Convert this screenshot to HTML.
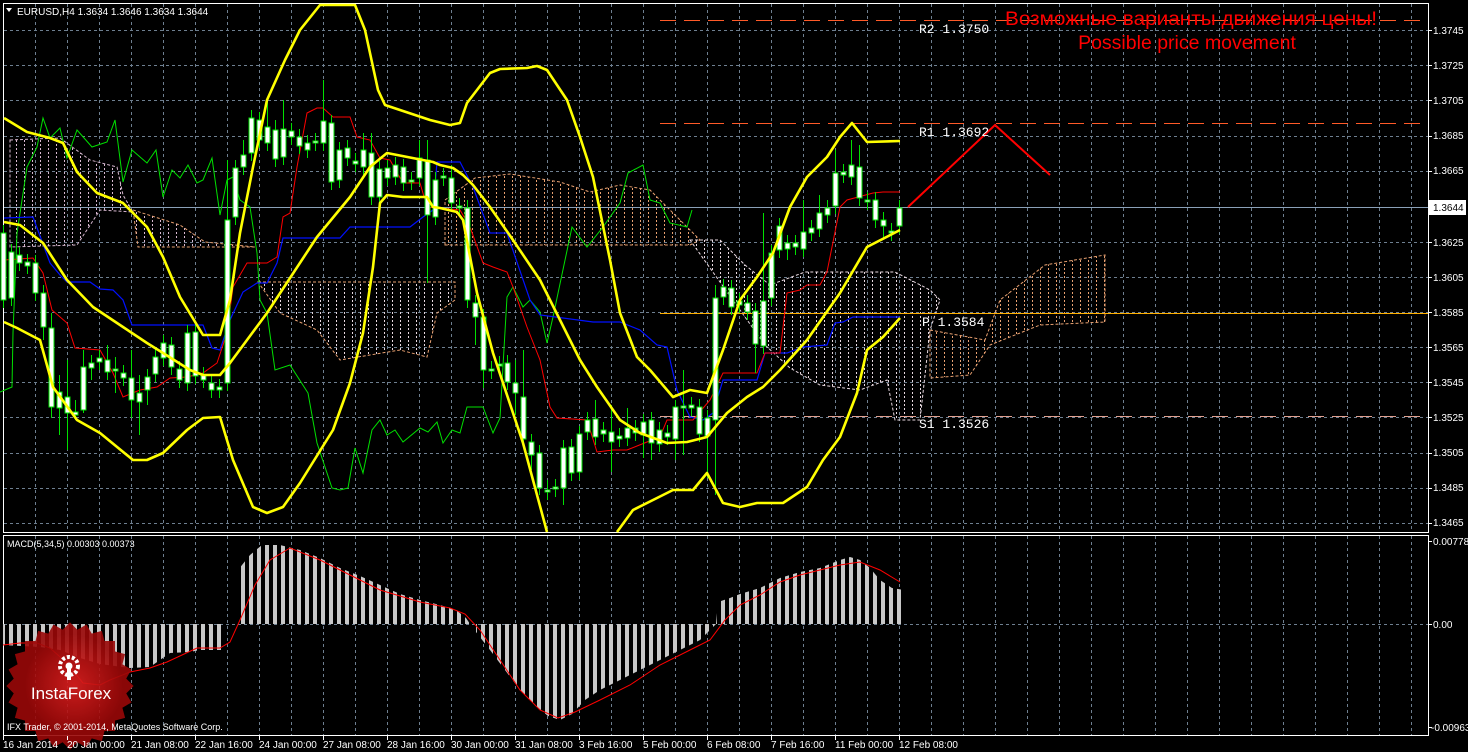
<!DOCTYPE html>
<html><head><meta charset="utf-8"><style>
html,body{margin:0;padding:0;background:#000;}
svg{display:block;}
text{font-family:"Liberation Sans",sans-serif;}
text.mono{font-family:"Liberation Mono",monospace;}
</style></head><body>
<svg width="1468" height="752" viewBox="0 0 1468 752" xmlns="http://www.w3.org/2000/svg">
<defs>
<pattern id="hp" x="0" y="0" width="8" height="4" patternUnits="userSpaceOnUse"><rect x="0" y="0" width="1" height="2" fill="#d8b8d0"/></pattern>
<pattern id="ho" x="0" y="0" width="8" height="4" patternUnits="userSpaceOnUse"><rect x="0" y="0" width="1" height="2" fill="#e8a070"/></pattern>
<pattern id="hw" x="0" y="0" width="8" height="4" patternUnits="userSpaceOnUse"><rect x="0" y="0" width="1" height="2" fill="#e8d8e0"/></pattern>
<pattern id="bars" x="1" y="0" width="8" height="10" patternUnits="userSpaceOnUse"><rect x="0" y="0" width="4" height="10" fill="#c8c8c8"/></pattern>
<radialGradient id="rg" cx="50%" cy="45%" r="55%"><stop offset="0" stop-color="#e02020"/><stop offset="1" stop-color="#9a0808"/></radialGradient>
</defs>
<rect width="1468" height="752" fill="#000"/>
<rect x="3.5" y="3.5" width="1425" height="529" fill="none" stroke="#fff" stroke-width="1"/>
<rect x="3.5" y="535.5" width="1425" height="200" fill="none" stroke="#fff" stroke-width="1"/>
<g stroke="#6e7f90" stroke-width="1" stroke-dasharray="3,3">
<path d="M35.5 4V532M67.5 4V532M99.5 4V532M131.5 4V532M163.5 4V532M195.5 4V532M227.5 4V532M259.5 4V532M291.5 4V532M323.5 4V532M355.5 4V532M387.5 4V532M419.5 4V532M451.5 4V532M483.5 4V532M515.5 4V532M547.5 4V532M579.5 4V532M611.5 4V532M643.5 4V532M675.5 4V532M707.5 4V532M739.5 4V532M771.5 4V532M803.5 4V532M835.5 4V532M867.5 4V532M899.5 4V532M931.5 4V532M963.5 4V532M995.5 4V532M1027.5 4V532M1059.5 4V532M1091.5 4V532M1123.5 4V532M1155.5 4V532M1187.5 4V532M1219.5 4V532M1251.5 4V532M1283.5 4V532M1315.5 4V532M1347.5 4V532M1379.5 4V532M1411.5 4V532"/>
<path d="M35.5 536V735M67.5 536V735M99.5 536V735M131.5 536V735M163.5 536V735M195.5 536V735M227.5 536V735M259.5 536V735M291.5 536V735M323.5 536V735M355.5 536V735M387.5 536V735M419.5 536V735M451.5 536V735M483.5 536V735M515.5 536V735M547.5 536V735M579.5 536V735M611.5 536V735M643.5 536V735M675.5 536V735M707.5 536V735M739.5 536V735M771.5 536V735M803.5 536V735M835.5 536V735M867.5 536V735M899.5 536V735M931.5 536V735M963.5 536V735M995.5 536V735M1027.5 536V735M1059.5 536V735M1091.5 536V735M1123.5 536V735M1155.5 536V735M1187.5 536V735M1219.5 536V735M1251.5 536V735M1283.5 536V735M1315.5 536V735M1347.5 536V735M1379.5 536V735M1411.5 536V735"/>
<path d="M4 30.5H1428M4 65.5H1428M4 100.5H1428M4 136.5H1428M4 171.5H1428M4 242.5H1428M4 277.5H1428M4 312.5H1428M4 347.5H1428M4 382.5H1428M4 417.5H1428M4 453.5H1428M4 488.5H1428M4 523.5H1428M4 624.5H1428"/>
</g>
<g stroke-dasharray="3,2" stroke-width="1">
<polygon points="10,140 60,138 90,160 117,167 123,195 133,212 100,210 77,245 10,247" fill="url(#hp)" stroke="#d8b8d0"/>
<polygon points="133,210 180,225 205,242 255,247 138,247" fill="url(#hp)" stroke="#e8a070"/>
<polygon points="258,282 455,282 455,300 437,313 427,357 400,350 340,360 317,330 280,313" fill="url(#hw)" stroke="#e8a070"/>
<polygon points="445,245 445,200 475,178 510,174 560,182 590,192 620,185 650,190 670,210 700,240 690,245" fill="url(#ho)" stroke="#e8a070"/>
<polygon points="690,240 720,240 745,265 770,285 805,272 895,272 930,290 940,300 930,330 920,420 895,420 887,380 860,390 820,385 790,368 765,345 740,310" fill="url(#hw)" stroke="#e8d8e0"/>
<polygon points="930,330 985,340 1000,300 1045,265 1105,255 1105,322 1040,325 990,345 970,375 930,378" fill="url(#ho)" stroke="#e8a070"/>
</g>
<path d="M660 20.5H1428" stroke="#ff5a28" stroke-dasharray="16,8" stroke-width="1"/>
<path d="M660 123.5H1428" stroke="#ff5a28" stroke-dasharray="16,8" stroke-width="1"/>
<path d="M660 313.5H1428" stroke="#ffb000" stroke-width="1"/>
<path d="M660 416.5H1428" stroke="#e0a090" stroke-dasharray="16,8" stroke-width="1"/>
<path d="M4 207.5H1428" stroke="#8aa0b8" stroke-width="1"/>
<polyline fill="none" stroke="#00e000" stroke-width="1" points="0,392 12,387 13,333 17,233 27,167 37,147 43,118 50,138 60,128 67,158 77,130 92,147 107,142 115,120 123,182 132,150 147,163 156,150 163,197 172,170 180,178 188,165 197,183 203,180 212,158 220,215 227,180 233,177 240,200 250,207 257,253 260,300 267,313 275,370 290,365 308,393 317,443 332,488 340,490 348,488 355,448 363,473 372,430 380,420 387,435 395,430 403,442 420,428 428,432 437,422 443,443 452,430 460,433 467,407 483,407 493,433 500,418 507,297 513,287 523,307 530,300 540,312 547,343 553,317 572,227 587,247 603,227 620,203 628,173 643,165 650,200 660,203 670,223 687,227 692,210"/>
<polyline fill="none" stroke="#0010ff" stroke-width="1.2" points="4,218 33,217 50,263 60,275 67,282 90,282 100,289 113,290 123,300 132,325 203,325 212,348 220,350 230,320 243,292 257,283 267,283 277,263 283,238 340,238 350,227 410,227 423,217 433,210 437,162 460,162 473,187 490,233 507,233 530,300 540,315 593,322 620,322 640,330 657,345 667,347 677,390 690,417 703,420 713,413 723,380 757,380 765,353 787,353 803,347 827,345 835,323 843,322 853,317 900,317"/>
<polyline fill="none" stroke="#ff0000" stroke-width="1" points="4,260 33,258 43,273 52,310 67,323 75,348 100,350 113,373 123,397 140,390 157,387 170,378 187,377 203,373 217,363 227,333 233,287 247,263 267,263 277,257 283,217 290,213 297,167 307,113 317,108 323,108 333,117 350,117 357,137 370,140 380,158 390,160 403,183 420,183 427,207 440,208 460,210 470,227 483,263 493,267 507,272 513,287 527,327 540,360 550,407 557,418 587,420 597,452 613,450 627,450 647,442 660,437 667,420 693,420 710,400 723,373 757,373 765,353 780,353 787,293 800,290 807,285 820,285 827,272 840,207 847,200 873,193 883,192 900,192"/>
<path fill="none" stroke="#00e000" stroke-width="1" d="M3.5 225V308M11.5 244V306M19.5 247V271M27.5 254V274M35.5 255V301M43.5 285V340M51.5 313V418M59.5 375V435M67.5 360V450M75.5 400V420M83.5 350V413M91.5 355V380M99.5 350V370M107.5 345V380M115.5 357V393M123.5 365V386M131.5 350V418M139.5 375V435M147.5 369V405M155.5 349V382M163.5 335V366M171.5 337V375M179.5 361V388M187.5 325V391M195.5 324V384M203.5 367V388M211.5 375V398M219.5 379V398M227.5 160V391M235.5 160V225M243.5 140V175M251.5 110V161M259.5 112V148M267.5 100V151M275.5 120V167M283.5 100V165M291.5 123V145M299.5 129V154M307.5 135V158M315.5 133V151M323.5 80V151M331.5 115V190M339.5 142V188M347.5 140V166M355.5 153V172M363.5 133V175M371.5 133V205M379.5 161V205M387.5 160V186M395.5 157V185M403.5 159V191M411.5 172V190M419.5 140V186M427.5 140V283M435.5 172V225M443.5 168V186M451.5 165V211M459.5 198V216M467.5 200V308M475.5 295V345M483.5 309V388M491.5 361V379M499.5 356V374M507.5 355V390M515.5 360V415M523.5 350V447M531.5 434V470M539.5 445V495M547.5 480V500M555.5 479V497M563.5 440V505M571.5 439V481M579.5 426V480M587.5 412V440M595.5 400V445M603.5 422V442M611.5 405V472M619.5 428V447M627.5 408V446M635.5 420V441M643.5 414V458M651.5 412V460M659.5 422V452M667.5 425V445M675.5 400V460M683.5 370V455M691.5 397V416M699.5 399V442M707.5 410V478M715.5 285V495M723.5 279V305M731.5 280V315M739.5 293V313M747.5 295V320M755.5 303V373M763.5 213V354M771.5 245V306M779.5 218V258M787.5 235V260M795.5 235V255M803.5 200V257M811.5 220V241M819.5 195V237M827.5 200V223M835.5 150V214M843.5 164V183M851.5 140V185M859.5 145V206M867.5 192V210M875.5 192V228M883.5 212V238M891.5 223V241M899.5 200V234"/>
<g fill="#fff" stroke="#00e000" stroke-width="1">
<rect x="1" y="233" width="5" height="67"/><rect x="9" y="252" width="5" height="46"/><rect x="17" y="255" width="5" height="8"/><rect x="25" y="262" width="5" height="4"/><rect x="33" y="263" width="5" height="30"/><rect x="41" y="293" width="5" height="34"/><rect x="49" y="328" width="5" height="79"/><rect x="57" y="392" width="5" height="16"/><rect x="65" y="397" width="5" height="16"/><rect x="73" y="412" width="5" height="3"/><rect x="81" y="367" width="5" height="43"/><rect x="89" y="363" width="5" height="5"/><rect x="97" y="358" width="5" height="4"/><rect x="105" y="360" width="5" height="12"/><rect x="113" y="369" width="5" height="2"/><rect x="121" y="373" width="5" height="5"/><rect x="129" y="378" width="5" height="22"/><rect x="137" y="393" width="5" height="9"/><rect x="145" y="377" width="5" height="13"/><rect x="153" y="357" width="5" height="17"/><rect x="161" y="343" width="5" height="15"/><rect x="169" y="345" width="5" height="22"/><rect x="177" y="369" width="5" height="11"/><rect x="185" y="333" width="5" height="50"/><rect x="193" y="332" width="5" height="44"/><rect x="201" y="375" width="5" height="5"/><rect x="209" y="383" width="5" height="7"/><rect x="217" y="387" width="5" height="3"/><rect x="225" y="220" width="5" height="163"/><rect x="233" y="168" width="5" height="49"/><rect x="241" y="155" width="5" height="12"/><rect x="249" y="118" width="5" height="35"/><rect x="257" y="120" width="5" height="20"/><rect x="265" y="127" width="5" height="16"/><rect x="273" y="130" width="5" height="29"/><rect x="281" y="129" width="5" height="28"/><rect x="289" y="131" width="5" height="6"/><rect x="297" y="137" width="5" height="9"/><rect x="305" y="143" width="5" height="7"/><rect x="313" y="141" width="5" height="2"/><rect x="321" y="121" width="5" height="22"/><rect x="329" y="123" width="5" height="59"/><rect x="337" y="150" width="5" height="30"/><rect x="345" y="148" width="5" height="10"/><rect x="353" y="161" width="5" height="3"/><rect x="361" y="150" width="5" height="17"/><rect x="369" y="153" width="5" height="44"/><rect x="377" y="169" width="5" height="28"/><rect x="385" y="168" width="5" height="10"/><rect x="393" y="165" width="5" height="12"/><rect x="401" y="167" width="5" height="16"/><rect x="409" y="180" width="5" height="2"/><rect x="417" y="158" width="5" height="20"/><rect x="425" y="160" width="5" height="55"/><rect x="433" y="180" width="5" height="37"/><rect x="441" y="176" width="5" height="2"/><rect x="449" y="178" width="5" height="25"/><rect x="457" y="206" width="5" height="2"/><rect x="465" y="208" width="5" height="92"/><rect x="473" y="303" width="5" height="14"/><rect x="481" y="317" width="5" height="53"/><rect x="489" y="369" width="5" height="2"/><rect x="497" y="364" width="5" height="2"/><rect x="505" y="363" width="5" height="19"/><rect x="513" y="383" width="5" height="10"/><rect x="521" y="397" width="5" height="42"/><rect x="529" y="442" width="5" height="13"/><rect x="537" y="453" width="5" height="35"/><rect x="545" y="490" width="5" height="2"/><rect x="553" y="487" width="5" height="2"/><rect x="561" y="448" width="5" height="40"/><rect x="569" y="447" width="5" height="26"/><rect x="577" y="434" width="5" height="38"/><rect x="585" y="420" width="5" height="12"/><rect x="593" y="419" width="5" height="18"/><rect x="601" y="430" width="5" height="4"/><rect x="609" y="432" width="5" height="10"/><rect x="617" y="436" width="5" height="3"/><rect x="625" y="428" width="5" height="10"/><rect x="633" y="428" width="5" height="5"/><rect x="641" y="422" width="5" height="13"/><rect x="649" y="420" width="5" height="23"/><rect x="657" y="430" width="5" height="14"/><rect x="665" y="433" width="5" height="4"/><rect x="673" y="407" width="5" height="32"/><rect x="681" y="406" width="5" height="2"/><rect x="689" y="405" width="5" height="3"/><rect x="697" y="407" width="5" height="27"/><rect x="705" y="418" width="5" height="18"/><rect x="713" y="298" width="5" height="122"/><rect x="721" y="287" width="5" height="10"/><rect x="729" y="288" width="5" height="19"/><rect x="737" y="301" width="5" height="4"/><rect x="745" y="303" width="5" height="9"/><rect x="753" y="311" width="5" height="33"/><rect x="761" y="301" width="5" height="45"/><rect x="769" y="253" width="5" height="45"/><rect x="777" y="226" width="5" height="24"/><rect x="785" y="243" width="5" height="6"/><rect x="793" y="243" width="5" height="4"/><rect x="801" y="232" width="5" height="17"/><rect x="809" y="228" width="5" height="5"/><rect x="817" y="213" width="5" height="16"/><rect x="825" y="208" width="5" height="7"/><rect x="833" y="173" width="5" height="33"/><rect x="841" y="172" width="5" height="3"/><rect x="849" y="165" width="5" height="12"/><rect x="857" y="167" width="5" height="31"/><rect x="865" y="200" width="5" height="2"/><rect x="873" y="200" width="5" height="20"/><rect x="881" y="220" width="5" height="6"/><rect x="889" y="231" width="5" height="2"/><rect x="897" y="208" width="5" height="18"/>
</g>
<g fill="none" stroke="#ffff00" stroke-width="2.6" stroke-linejoin="round">
<polyline points="4,118 27,132 50,138 63,143 77,172 97,193 110,198 123,203 147,227 163,257 180,297 203,335 220,335 230,300 240,233 253,167 267,100 285,60 300,30 320,5 355,5 365,30 378,90 385,105 400,110 430,120 450,125 460,123 467,103 490,73 500,69 527,68 537,66 547,70 567,100 580,137 593,177 610,260 620,313 637,357 650,370 673,397 690,390 707,393 723,350 740,300 757,277 773,253 790,207 807,177 827,157 840,137 852,123 867,142 900,141"/>
<polyline points="4,222 20,225 43,243 67,280 93,307 123,327 147,343 163,353 190,370 203,375 220,375 230,363 267,313 317,237 350,197 370,167 387,153 433,162 440,165 453,168 463,175 473,185 490,207 513,240 540,280 560,320 580,360 597,387 620,420 640,433 667,443 687,442 707,437 727,413 747,397 763,387 780,370 807,340 840,293 867,247 900,230"/>
<polyline points="4,322 17,328 40,340 53,387 77,420 100,433 133,460 147,460 163,453 187,430 203,418 220,417 233,460 253,507 267,513 283,507 300,483 333,430 350,383 363,333 373,267 380,203 387,195 403,197 427,197 433,207 440,208 457,212 463,220 477,293 493,353 523,443 547,532"/>
<polyline points="617,532 633,510 653,500 673,490 693,490 707,473 723,503 740,507 757,503 783,503 807,487 823,460 840,437 857,393 867,350 883,337 900,318"/>
</g>
<polyline points="908,207 995,125 1050,175" fill="none" stroke="#ff0000" stroke-width="2"/>
<g fill="#fff" font-size="13">
<text class="mono" x="919" y="33">R2 1.3750</text>
<text class="mono" x="919" y="136">R1 1.3692</text>
<text class="mono" x="922" y="326">P 1.3584</text>
<text class="mono" x="919" y="428">S1 1.3526</text>
</g>
<text x="1191" y="25" fill="#ff0000" font-size="19.5" text-anchor="middle" textLength="372" lengthAdjust="spacingAndGlyphs">Возможные варианты движения цены!</text>
<text x="1187" y="49" fill="#ff0000" font-size="19.5" text-anchor="middle">Possible price movement</text>
<polygon points="6,8 12,8 9,12" fill="#fff"/>
<text x="17" y="15" fill="#fff" font-size="10">EURUSD,H4  1.3634 1.3646 1.3634 1.3644</text>
<g fill="#fff" font-size="10">
<text x="1433" y="34">1.3745</text><text x="1433" y="69">1.3725</text><text x="1433" y="104">1.3705</text><text x="1433" y="139">1.3685</text><text x="1433" y="174">1.3665</text><text x="1433" y="246">1.3625</text><text x="1433" y="281">1.3605</text><text x="1433" y="316">1.3585</text><text x="1433" y="351">1.3565</text><text x="1433" y="386">1.3545</text><text x="1433" y="421">1.3525</text><text x="1433" y="456">1.3505</text><text x="1433" y="491">1.3485</text><text x="1433" y="526">1.3465</text>
<text x="1433" y="545">0.00778</text><text x="1433" y="628">0.00</text><text x="1431" y="731">-0.00963</text>
</g>
<path d="M1428 30.5h4M1428 65.5h4M1428 100.5h4M1428 136.5h4M1428 171.5h4M1428 242.5h4M1428 277.5h4M1428 312.5h4M1428 347.5h4M1428 382.5h4M1428 417.5h4M1428 453.5h4M1428 488.5h4M1428 523.5h4M1428 541.5h4M1428 624.5h4M1428 727.5h4" stroke="#fff"/>
<rect x="1429" y="200" width="37" height="15" fill="#fff"/>
<text x="1433" y="211" fill="#000" font-size="10">1.3644</text>
<polygon fill="url(#bars)" points="3,624 3,645 40,647 60,650 80,658 100,664 130,668 150,667 160,660 170,653 190,652 200,650 222,650 222,624 238,624 238,570 250,555 262,545 280,545 300,550 320,558 340,568 360,576 380,585 400,594 420,600 440,605 456,610 466,618 470,624 476,624 476,632 490,650 505,670 520,690 535,705 548,716 560,720 572,714 585,700 600,690 620,680 640,670 660,660 680,650 700,640 710,630 716,624 718,602 730,598 740,594 760,588 780,578 800,572 820,568 840,560 850,557 860,560 870,568 880,580 892,588 904,590 904,624"/>
<polyline fill="none" stroke="#ff0000" stroke-width="1" points="3,645 20,643 37,643 50,648 67,663 83,683 100,685 110,680 130,672 150,668 167,662 197,648 220,648 230,642 240,620 255,585 270,560 290,548 320,560 350,575 380,590 420,602 450,608 465,614 480,630 500,660 520,690 540,710 558,718 575,712 600,700 630,685 660,665 690,650 710,640 725,620 740,605 760,595 780,582 800,575 820,570 840,565 860,562 880,570 900,582"/>
<text x="7" y="547" fill="#fff" font-size="9">MACD(5,34,5) 0.00303 0.00373</text>
<g transform="translate(70,686)" opacity="0.9">
<g fill="url(#rg)">
<rect x="-45" y="-45" width="90" height="90"/>
<rect x="-45" y="-45" width="90" height="90" transform="rotate(15)"/>
<rect x="-45" y="-45" width="90" height="90" transform="rotate(30)"/>
<rect x="-45" y="-45" width="90" height="90" transform="rotate(45)"/>
<rect x="-45" y="-45" width="90" height="90" transform="rotate(60)"/>
<rect x="-45" y="-45" width="90" height="90" transform="rotate(75)"/>
</g>
</g>
<g fill="#fff">
<circle cx="69" cy="666" r="9" fill="none" stroke="#fff" stroke-width="4" stroke-dasharray="3,2"/>
<circle cx="69" cy="666" r="3.5"/>
<rect x="67" y="666" width="4" height="14"/>
</g>
<text x="71" y="699" fill="#fff" font-size="17" text-anchor="middle">InstaForex</text>
<text x="7" y="730" fill="#fff" font-size="9">IFX Trader, © 2001-2014, MetaQuotes Software Corp.</text>
<path d="M3.5 736v4M67.5 736v4M131.5 736v4M195.5 736v4M259.5 736v4M323.5 736v4M387.5 736v4M451.5 736v4M515.5 736v4M579.5 736v4M643.5 736v4M707.5 736v4M771.5 736v4M835.5 736v4M899.5 736v4" stroke="#fff"/>
<g fill="#fff" font-size="10">
<text x="3" y="748">16 Jan 2014</text><text x="67" y="748">20 Jan 00:00</text><text x="131" y="748">21 Jan 08:00</text><text x="195" y="748">22 Jan 16:00</text><text x="259" y="748">24 Jan 00:00</text><text x="323" y="748">27 Jan 08:00</text><text x="387" y="748">28 Jan 16:00</text><text x="451" y="748">30 Jan 00:00</text><text x="515" y="748">31 Jan 08:00</text><text x="579" y="748">3 Feb 16:00</text><text x="643" y="748">5 Feb 00:00</text><text x="707" y="748">6 Feb 08:00</text><text x="771" y="748">7 Feb 16:00</text><text x="835" y="748">11 Feb 00:00</text><text x="899" y="748">12 Feb 08:00</text>
</g>
</svg>
</body></html>
